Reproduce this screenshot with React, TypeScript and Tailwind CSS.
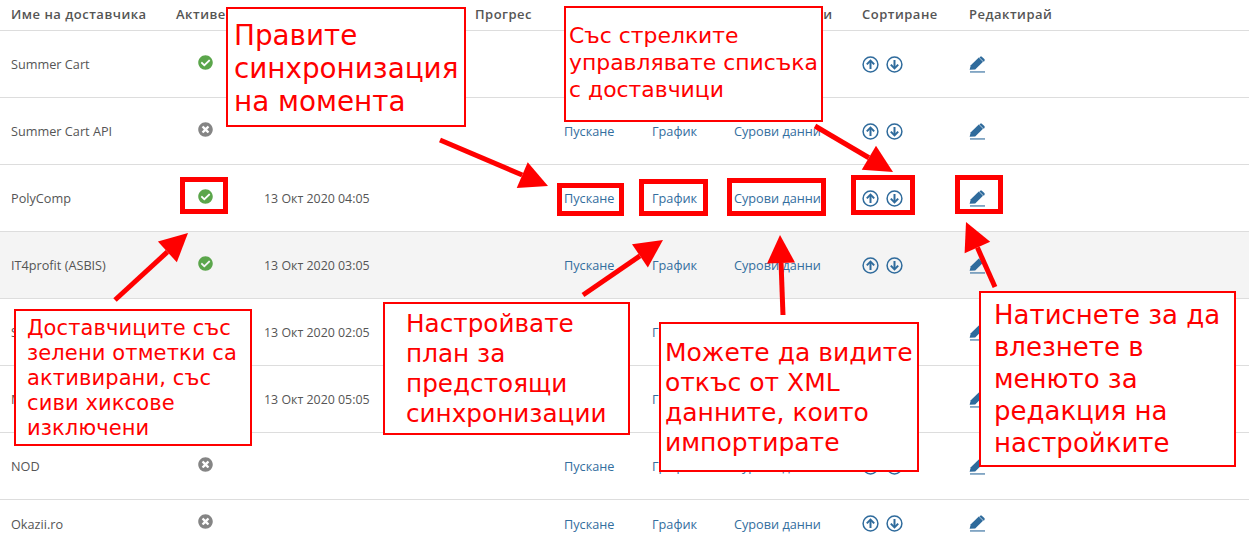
import React from 'react';
import { FaCheckCircle, FaTimesCircle } from 'react-icons/fa';

type Row = { name: string; active: boolean; date?: string; shaded?: boolean };

const rows: Row[] = [
  { name: 'Summer Cart', active: true },
  { name: 'Summer Cart API', active: false },
  { name: 'PolyComp', active: true, date: '13 Окт 2020 04:05' },
  { name: 'IT4profit (ASBIS)', active: true, date: '13 Окт 2020 03:05', shaded: true },
  { name: 'Stantek', active: true, date: '13 Окт 2020 02:05' },
  { name: 'Mobica', active: true, date: '13 Окт 2020 05:05' },
  { name: 'NOD', active: false },
  { name: 'Okazii.ro', active: false },
];

const gridCols = 'grid grid-cols-[165px_88px_211px_89px_88px_82px_128px_107px_1fr] pl-[11px] items-center';

const callouts = [
  { box: 'left-[226px] top-[7px] w-[240px] h-[120px] pl-[6px] pt-[10px] text-[27.8px] leading-[33px]', lines: ['Правите', 'синхронизация', 'на момента'] },
  { box: 'left-[564px] top-[6px] w-[259px] h-[116px] pl-[3px] pt-[14px] text-[21.9px] leading-[27px]', lines: ['Със стрелките', 'управлявате списъка', 'с доставчици'] },
  { box: 'left-[14px] top-[309px] w-[238px] h-[137px] pl-[11px] pt-[5px] text-[21px] leading-[25px] tracking-[0.12px]', lines: ['Доставчиците със', 'зелени отметки са', 'активирани, със', 'сиви хиксове', 'изключени'] },
  { box: 'left-[383px] top-[302px] w-[247px] h-[133px] pl-[21px] pt-[5px] text-[24.7px] leading-[30px]', lines: ['Настройвате', 'план за', 'предстоящи', 'синхронизации'] },
  { box: 'left-[659px] top-[322px] w-[260px] h-[150px] pl-[4px] pt-[14px] text-[25px] leading-[30px]', lines: ['Можете да видите', 'откъс от XML', 'данните, които', 'импортирате'] },
  { box: 'left-[979px] top-[291px] w-[257px] h-[176px] pl-[13px] pt-[6px] text-[26px] leading-[32px]', lines: ['Натиснете за да', 'влезнете в', 'менюто за', 'редакция на', 'настройките'] },
];

const frames = [
  'left-[180px] top-[177px] w-[48px] h-[37px]',
  'left-[557px] top-[183px] w-[67px] h-[33px]',
  'left-[639px] top-[179px] w-[69px] h-[37px]',
  'left-[727px] top-[178px] w-[99px] h-[38px]',
  'left-[851px] top-[175px] w-[64px] h-[40px]',
  'left-[955px] top-[175px] w-[48px] h-[39px]',
];

const arrows = [
  { x1: 440, y1: 140, x2: 548, y2: 186 },
  { x1: 815, y1: 126, x2: 893, y2: 172 },
  { x1: 115, y1: 300, x2: 188, y2: 233 },
  { x1: 583, y1: 295, x2: 663, y2: 240 },
  { x1: 783, y1: 315, x2: 780, y2: 235 },
  { x1: 995, y1: 287, x2: 966, y2: 222 },
];

function Arrow({ x1, y1, x2, y2 }: { x1: number; y1: number; x2: number; y2: number }) {
  const len = Math.hypot(x2 - x1, y2 - y1);
  const ux = (x2 - x1) / len;
  const uy = (y2 - y1) / len;
  const bx = x2 - ux * 28;
  const by = y2 - uy * 28;
  const head = `${x2},${y2} ${bx - uy * 14},${by + ux * 14} ${bx + uy * 14},${by - ux * 14}`;
  return (
    <g fill="#ff0000" stroke="#ff0000">
      <line x1={x1} y1={y1} x2={bx} y2={by} strokeWidth="5" />
      <polygon points={head} strokeWidth="0" />
    </g>
  );
}

function SortIcon({ down }: { down?: boolean }) {
  return (
    <svg width="17" height="17" viewBox="0 0 17 17" fill="none" stroke="#2f6b9c">
      <circle cx="8.5" cy="8.5" r="7.4" strokeWidth="1.5" />
      <g transform={down ? 'rotate(180 8.5 8.5)' : undefined} strokeWidth="2">
        <path d="M8.5 13V5" />
        <path d="M4.8 8.4 8.5 4.6l3.7 3.8" />
      </g>
    </svg>
  );
}

function PencilIcon() {
  return (
    <svg width="17" height="17" viewBox="0 0 17 17" fill="#2f6b9c">
      <path d="M.6 13.8 1.8 9.2 9.8 1.6l4.2 4.2-7.8 7.6z" />
      <path d="M11 .9c.6-.6 1.5-.6 2.1 0l2.2 2.2c.6.6.6 1.5 0 2.1l-.6.5L10.4 1.5z" />
      <rect x="1" y="15.4" width="15" height="1.1" />
    </svg>
  );
}

export default function App() {
  return (
    <div className="relative w-[1249px] h-[541px] overflow-hidden bg-white font-['Open_Sans',sans-serif] text-[12.7px] text-[#555]">
      <div className={`${gridCols} h-[31px] border-b border-[#ddd] text-[13px] font-semibold tracking-[0.5px]`}>
        <span>Име на доставчика</span>
        <span>Активен</span>
        <span>Последна</span>
        <span>Прогрес</span>
        <span>Пускане</span>
        <span>График</span>
        <span>Сурови данни</span>
        <span>Сортиране</span>
        <span>Редактирай</span>
      </div>
      <div>
        {rows.map((row) => (
          <div
            key={row.name}
            className={`${gridCols} h-[67px] border-b border-[#ddd] last:border-b-0 last:h-[47px] ${row.shaded ? 'bg-[#f4f4f4]' : 'bg-white'}`}
          >
            <span className="pt-[2px]">{row.name}</span>
            <span className="pl-[22px] mb-[4px] flex">
              {row.active ? (
                <FaCheckCircle className="text-[15px] text-[#5ba64b]" />
              ) : (
                <FaTimesCircle className="text-[15px] text-[#858585]" />
              )}
            </span>
            <span className="pt-[2px] text-[12.4px]">{row.date}</span>
            <span />
            <a className="pt-[2px] text-[#336e9e]">Пускане</a>
            <a className="pt-[2px] text-[#336e9e]">График</a>
            <a className="pt-[2px] text-[#336e9e]">Сурови данни</a>
            <span className="flex gap-[7px]">
              <SortIcon />
              <SortIcon down />
            </span>
            <span className="flex">
              <PencilIcon />
            </span>
          </div>
        ))}
      </div>

      <svg className="absolute inset-0" width="1249" height="541">
        {arrows.map((a, i) => (
          <Arrow key={i} {...a} />
        ))}
      </svg>
      {frames.map((f) => (
        <div key={f} className={`absolute border-[5px] border-[#ff0000] ${f}`} />
      ))}
      {callouts.map((c) => (
        <div
          key={c.lines[0]}
          className={`absolute bg-white border-2 border-[#ff0000] text-[#ff0000] font-['DejaVu_Sans',sans-serif] whitespace-nowrap ${c.box}`}
        >
          {c.lines.map((l) => (
            <div key={l}>{l}</div>
          ))}
        </div>
      ))}
    </div>
  );
}
